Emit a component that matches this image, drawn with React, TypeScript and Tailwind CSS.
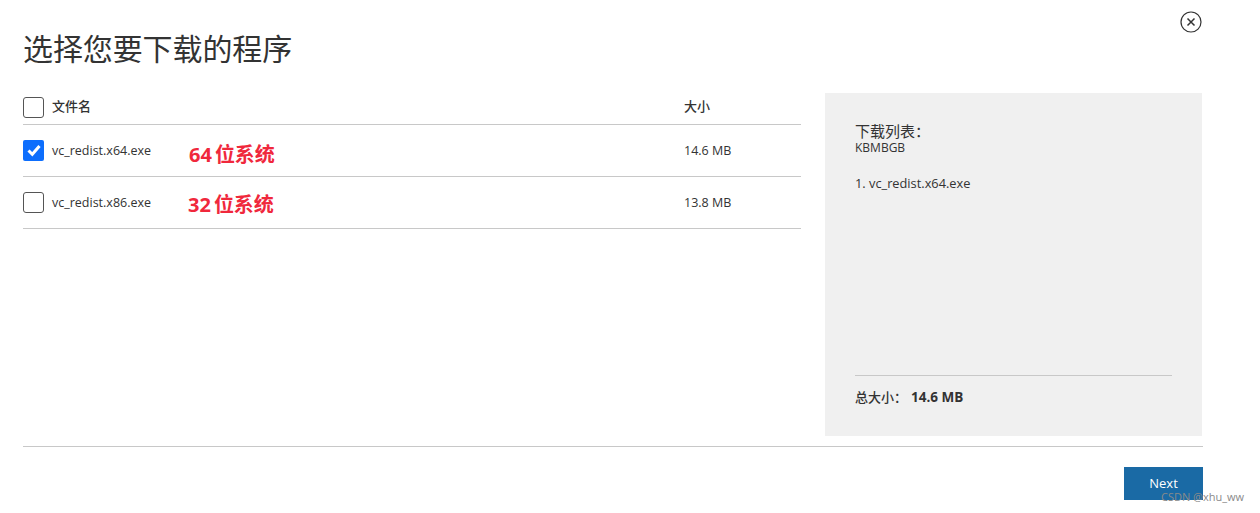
const CJK = "font-['Open_Sans','Noto_Sans_CJK_SC',sans-serif]";

function Check({ checked }: { checked?: boolean }) {
  if (checked) {
    return (
      <span className="flex h-[21px] w-[21px] shrink-0 items-center justify-center rounded-[2px] bg-[#0d6efd]">
        <svg width="16" height="16" viewBox="0 0 16 16" fill="none">
          <path d="M2.5 8.5 L6.3 12.3 L13.5 4" stroke="#fff" strokeWidth="3" />
        </svg>
      </span>
    );
  }
  return <span className="h-[21px] w-[21px] shrink-0 rounded-[3px] border border-[#555] bg-white" />;
}

function Row({ name, size, bits, note, checked, noteClass }: { name: string; size: string; bits: string; note: string; checked?: boolean; noteClass: string }) {
  return (
    <div className="relative flex h-[52px] items-center border-b border-[#c8c8c8] pb-[1px]">
      <Check checked={checked} />
      <span className="ml-[8px] w-[632px] pt-[2px] text-[12.5px] text-[#333]">{name}</span>
      <span className="pt-[2px] text-[12.5px] text-[#333]">{size}</span>
      <span className={`absolute flex gap-[3px] text-[20px] leading-none font-bold text-[#f0283c] ${noteClass}`}>
        <span>{bits}</span>
        <span>{note}</span>
      </span>
    </div>
  );
}

export default function App() {
  return (
    <div className={`relative h-[513px] w-[1260px] overflow-hidden bg-white pl-[23px] pr-[57px] ${CJK}`}>
      <div className="flex justify-end pt-[11px] pr-[1px]">
        <svg width="22" height="22" viewBox="0 0 22 22" fill="none" stroke="#333" strokeWidth="1.2">
          <circle cx="11" cy="11" r="10" />
          <path d="M7.5 7.5 L14.5 14.5 M14.5 7.5 L7.5 14.5" strokeWidth="1.5" />
        </svg>
      </div>
      <h1 className="mt-[-4px] h-[64px] text-[30px] leading-[40px] font-normal tracking-[-0.1px] text-[#333]">选择您要下载的程序</h1>

      <div className="flex h-[343px]">
        <div className="w-[778px]">
          <div className="flex h-[32px] items-start border-b border-[#c8c8c8] pt-[4px]">
            <Check />
            <span className="ml-[8px] w-[632px] text-[13px] leading-[18px] font-medium text-[#333]">文件名</span>
            <span className="text-[13px] leading-[18px] font-medium text-[#333]">大小</span>
          </div>
          <Row name="vc_redist.x64.exe" size="14.6 MB" bits="64" note="位系统" checked noteClass="left-[166px] top-[20px]" />
          <Row name="vc_redist.x86.exe" size="13.8 MB" bits="32" note="位系统" noteClass="left-[165px] top-[18px]" />
        </div>

        <div className="ml-[24px] flex w-[377px] flex-col bg-[#f0f0f0] px-[30px]">
          <div className="mt-[29px] text-[15px] leading-[18px] text-[#333]">下载列表：</div>
          <div className="text-[12px] leading-[15px] text-[#333]">KBMBGB</div>
          <div className="mt-[20px] text-[12.8px] leading-[17px] text-[#333]">1. vc_redist.x64.exe</div>
          <div className="mt-auto mb-[29px] border-t border-[#c8c8c8] pt-[11px] text-[13px] leading-[20px] text-[#333]">
            <span className="font-medium">总大小：</span>
            <span className="ml-[4px] text-[13.5px] font-bold">14.6 MB</span>
          </div>
        </div>
      </div>

      <div className="mt-[10px] border-t border-[#c8c8c8]" />
      <div className="mt-[20px] flex justify-end">
        <button className="h-[33px] w-[79px] bg-[#1a6aa5] pt-[1px] text-[13px] text-white">Next</button>
      </div>

      <span className="absolute top-[491px] left-[1161px] text-[11px] leading-none text-[#8a8a8a]">CSDN @xhu_ww</span>
    </div>
  );
}
